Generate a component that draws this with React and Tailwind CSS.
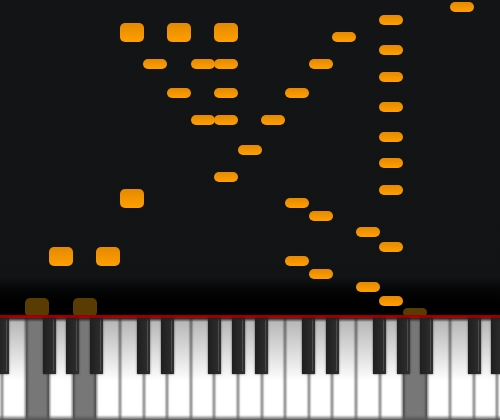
const KEY = 23.6;
const lineX = (i) => 2 + i * KEY;

// line = white key line the note starts on
const notes = [
  { line: 5, y: 22.5, big: true },
  { line: 7, y: 22.5, big: true },
  { line: 9, y: 22.5, big: true },
  { line: 5, y: 189, big: true },
  { line: 2, y: 247, big: true },
  { line: 4, y: 247, big: true },
  { line: 19, y: 2 },
  { line: 16, y: 15 },
  { line: 14, y: 32 },
  { line: 16, y: 45 },
  { line: 6, y: 59 },
  { line: 8, y: 59 },
  { line: 9, y: 59 },
  { line: 13, y: 59 },
  { line: 16, y: 72 },
  { line: 7, y: 88 },
  { line: 9, y: 88 },
  { line: 12, y: 88 },
  { line: 16, y: 102 },
  { line: 8, y: 115 },
  { line: 9, y: 115 },
  { line: 11, y: 115 },
  { line: 16, y: 132 },
  { line: 10, y: 145 },
  { line: 16, y: 158 },
  { line: 9, y: 172 },
  { line: 16, y: 185 },
  { line: 12, y: 198 },
  { line: 13, y: 211 },
  { line: 15, y: 227 },
  { line: 16, y: 242 },
  { line: 12, y: 256 },
  { line: 13, y: 269 },
  { line: 15, y: 282 },
  { line: 16, y: 296 },
];

// notes being played, dimmed and touching the keyboard
const playing = [
  { line: 1, y: 298, h: 19 },
  { line: 3, y: 298, h: 19 },
  { line: 17, y: 308, h: 9 },
];

const pressedKeys = [2, 4, 18];
const whiteKeys = Array.from({ length: 23 }, (_, i) => i);
const blackKeys = [0, 2, 3, 4, 6, 7, 9, 10, 11, 13, 14, 16, 17, 18, 20, 21];

function WhiteKey({ pressed }) {
  return (
    <div
      className={
        pressed
          ? 'h-full w-[23.6px] shrink-0 bg-[#777] shadow-[inset_2px_0_2px_rgba(0,0,0,.3),inset_-2px_0_2px_rgba(0,0,0,.3)]'
          : 'h-full w-[23.6px] shrink-0 bg-gradient-to-b from-[#b4b4b4] via-[#fff] via-[62%] to-[#fff] shadow-[inset_1.5px_0_1.5px_rgba(0,0,0,.42),inset_-1.5px_0_1.5px_rgba(0,0,0,.42)]'
      }
    />
  );
}

function BlackKey({ line }) {
  return (
    <div
      className="absolute top-0 flex h-14 w-[13px] justify-end bg-gradient-to-r from-[#1f1f1f] to-[#303030] pr-0.5 shadow-[0_0_2px_rgba(0,0,0,.6)]"
      style={{ left: lineX(line) - 6.5 }}
    >
      <div className="mb-[3px] w-px bg-[#4c4c4c]" />
    </div>
  );
}

export default function App() {
  return (
    <div className="flex h-[420px] w-[500px] flex-col overflow-hidden bg-black">
      {/* Note roll */}
      <div className="relative h-[315px] shrink-0 overflow-hidden bg-gradient-to-b from-[#131416] via-[#111315] via-[88%] to-[#000]">
        {notes.map((note) => (
          <div
            key={`${note.line}-${note.y}`}
            className={
              note.big
                ? 'absolute h-[19px] w-6 rounded-[5px] bg-gradient-to-b from-[#e58a00] to-[#ff9f00]'
                : 'absolute h-2.5 w-6 rounded-[5px] bg-gradient-to-b from-[#e58a00] to-[#ff9f00]'
            }
            style={{ left: lineX(note.line) - 0.2, top: note.y }}
          />
        ))}
        {playing.map((note) => (
          <div
            key={note.line}
            className="absolute w-6 rounded-[5px] bg-[#5a3c02]"
            style={{ left: lineX(note.line) - 0.2, top: note.y, height: note.h }}
          />
        ))}
      </div>

      <div className="h-[3px] shrink-0 bg-gradient-to-b from-[#8f0000] to-[#b80000]" />

      {/* Keyboard */}
      <div className="relative h-[102px] shrink-0">
        <div className="ml-[-21.6px] flex h-full">
          {whiteKeys.map((i) => (
            <WhiteKey key={i} pressed={pressedKeys.includes(i)} />
          ))}
        </div>
        <div className="absolute inset-x-0 bottom-0 h-[5px] bg-gradient-to-b from-transparent to-[#555]" />
        {blackKeys.map((i) => (
          <BlackKey key={i} line={i} />
        ))}
        <div className="absolute inset-x-0 top-0 h-1 bg-gradient-to-b from-[#222] to-transparent" />
      </div>
    </div>
  );
}
